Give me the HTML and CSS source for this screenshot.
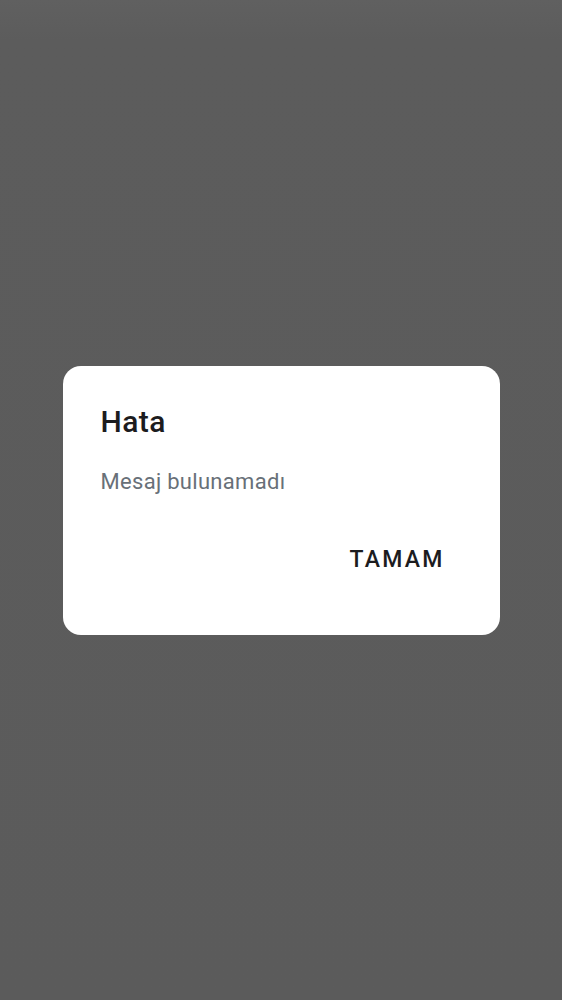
FILE: index.html
```html
<!DOCTYPE html>
<html lang="tr">
<head>
<meta charset="utf-8">
<title>Hata</title>
<link rel="stylesheet" href="styles.css">
</head>
<body>
<div class="scrim">
  <div class="dialog" role="alertdialog">
    <h2 class="dialog-title">Hata</h2>
    <p class="dialog-message">Mesaj bulunamadı</p>
    <div class="dialog-actions">
      <button class="dialog-button">TAMAM</button>
    </div>
  </div>
</div>
</body>
</html>
```

FILE: styles.css
```css
html, body {
  margin: 0;
  padding: 0;
  height: 100%;
}

body {
  font-family: Roboto, "Noto Sans", "Liberation Sans", sans-serif;
  background: #5b5b5b;
}

.scrim {
  height: 1000px;
  display: flex;
  align-items: center;
  justify-content: center;
  background: linear-gradient(to bottom, #606060 0px, #5c5c5c 40px, #5b5b5b 100%);
}

.dialog {
  width: 437px;
  height: 269px;
  box-sizing: border-box;
  background: #ffffff;
  border-radius: 18px;
  padding: 36px 38px 0 38px;
  display: flex;
  flex-direction: column;
}

.dialog-title {
  margin: 0;
  font-size: 30px;
  font-weight: 500;
  line-height: 40px;
  letter-spacing: 0.4px;
  color: #1c1c1e;
}

.dialog-message {
  margin: 25px 0 0 0;
  font-size: 22px;
  font-weight: 400;
  line-height: 30px;
  letter-spacing: 0.3px;
  color: #687078;
}

.dialog-actions {
  display: flex;
  justify-content: flex-end;
  margin-top: 48px;
}

.dialog-button {
  border: none;
  background: transparent;
  padding: 0 17px 0 0;
  font-family: inherit;
  font-size: 23px;
  font-weight: 500;
  line-height: 30px;
  letter-spacing: 2.2px;
  color: #1c1c1e;
  cursor: pointer;
}
```
